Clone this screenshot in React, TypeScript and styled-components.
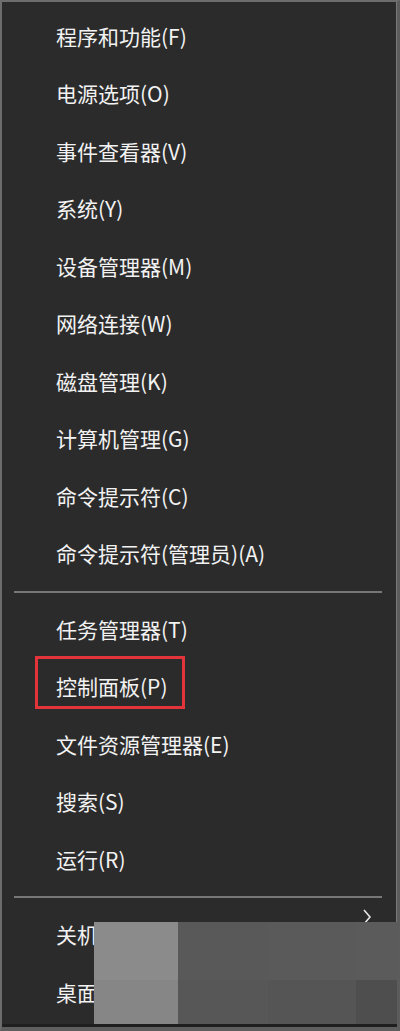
import React from 'react';
import styled, { createGlobalStyle } from 'styled-components';

const GlobalStyle = createGlobalStyle`
    html, body {
        margin: 0;
        padding: 0;
        background: #2b2b2b;
    }
`;

const Menu = styled.div`
    position: relative;
    box-sizing: border-box;
    width: 400px;
    height: 1031px;
    padding-top: 5.5px;
    background: #2b2b2b;
    border-top: 2px solid #6d6d6d;
    border-left: 2px solid #6d6d6d;
    border-right: 3px solid #5c5c5c;
    border-bottom: 4px solid #5e5e5e;
    box-shadow: inset 0 -3px 0 #1f1f1f, inset -1px 0 0 #7a7a7a;
    overflow: hidden;
    font-family: 'Noto Sans CJK SC', 'Noto Sans', sans-serif;
`;

const Row = styled.div`
    position: relative;
    display: flex;
    align-items: center;
    height: 57.5px;
    padding-left: 54px;
    padding-right: 25px;
    color: #f2f2f2;
    font-size: 21px;
    line-height: 1;
    white-space: nowrap;
`;

const Label = styled.span`
    flex: 1;
`;

const Separator = styled.div`
    height: 2px;
    margin: 8px 15px 8px 12px;
    background: #777777;
`;

const Marker = styled.div`
    position: absolute;
    left: 33px;
    top: -2.5px;
    width: 150px;
    height: 53px;
    box-sizing: border-box;
    border: 3px solid #e2343a;
    pointer-events: none;
`;

const Arrow = styled.svg`
    align-self: flex-start;
    margin-top: 2px;
    width: 10px;
    height: 18px;
`;

const Mosaic = styled.div`
    position: absolute;
    left: 92px;
    right: -3px;
    top: 920px;
    height: 102px;
    display: grid;
    grid-template-columns: 84px 90px 88px 1fr;
    grid-template-rows: 58px 1fr;
`;

const Tile = styled.div<{ $shade: string }>`
    background: ${(p) => p.$shade};
`;

const groups: string[][] = [
  [
    '程序和功能(F)',
    '电源选项(O)',
    '事件查看器(V)',
    '系统(Y)',
    '设备管理器(M)',
    '网络连接(W)',
    '磁盘管理(K)',
    '计算机管理(G)',
    '命令提示符(C)',
    '命令提示符(管理员)(A)',
  ],
  ['任务管理器(T)', '控制面板(P)', '文件资源管理器(E)', '搜索(S)', '运行(R)'],
  ['关机或注销(U)', '桌面(D)'],
];

const tiles = ['#8b8b8b', '#595959', '#5a5a5a', '#5b5b5b', '#868686', '#575757', '#555555', '#4e4e4e'];

function App() {
  return (
    <>
      <GlobalStyle />
      <Menu>
        {groups.map((items, gi) => (
          <React.Fragment key={gi}>
            {gi > 0 && <Separator />}
            {items.map((label) => (
              <Row key={label}>
                <Label>{label}</Label>
                {label === '控制面板(P)' && <Marker />}
                {label === '关机或注销(U)' && (
                  <Arrow viewBox="0 0 10 18">
                    <path d="M2 2 L8 9 L2 16" fill="none" stroke="#e6e6e6" strokeWidth="1.6" />
                  </Arrow>
                )}
              </Row>
            ))}
          </React.Fragment>
        ))}
        <Mosaic>
          {tiles.map((shade, i) => (
            <Tile key={i} $shade={shade} />
          ))}
        </Mosaic>
      </Menu>
    </>
  );
}

export default App;
